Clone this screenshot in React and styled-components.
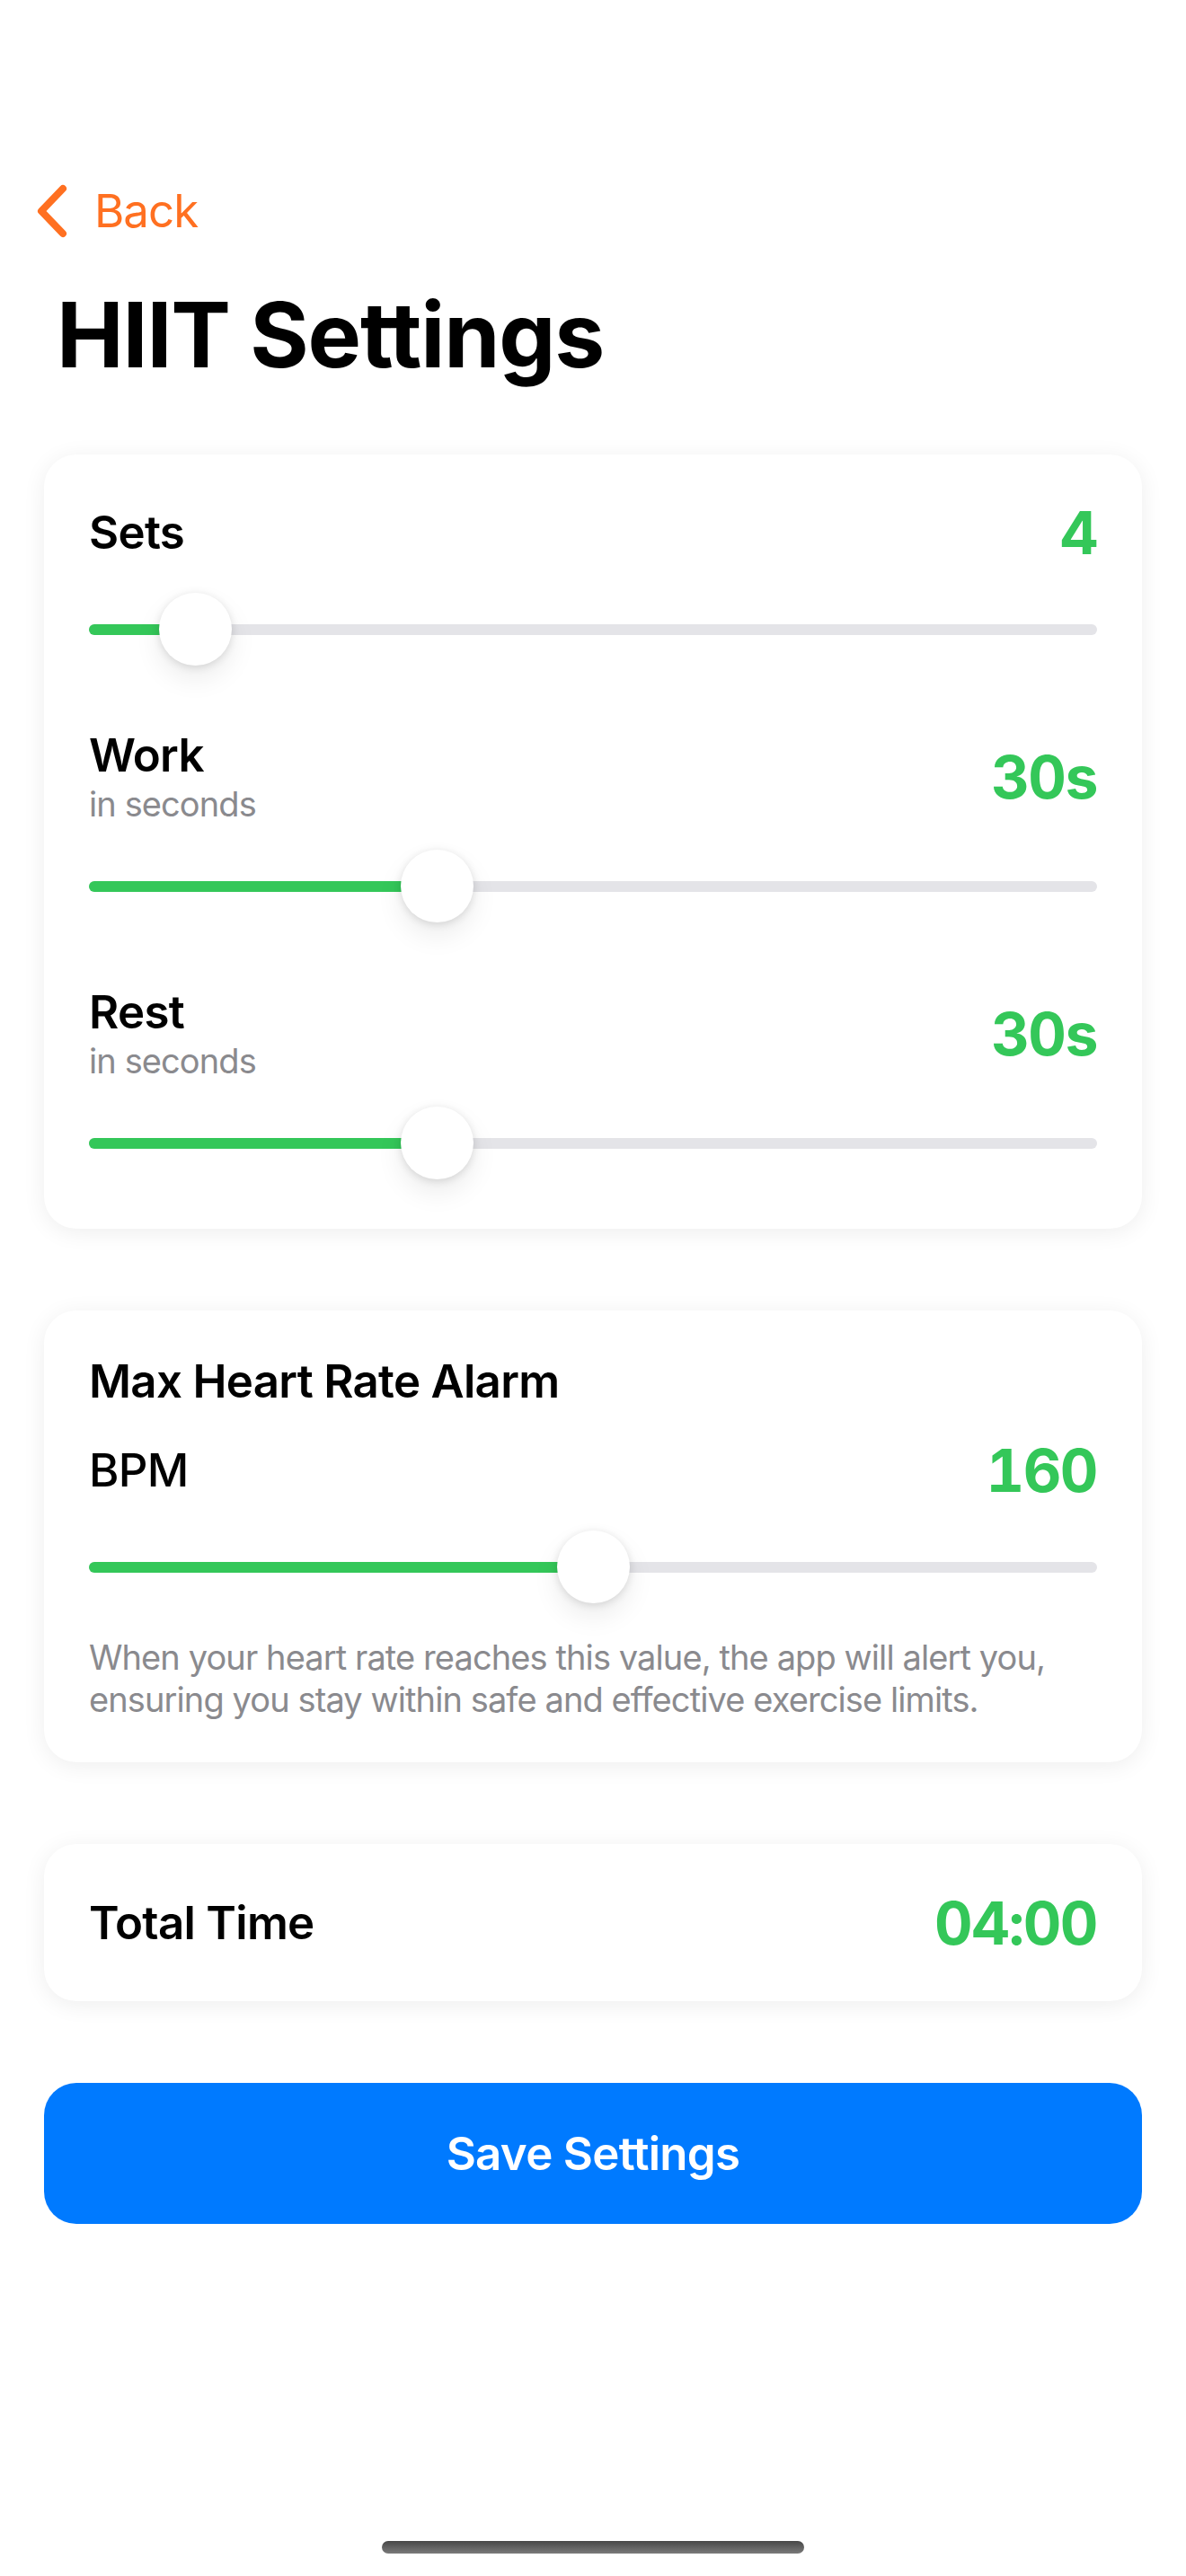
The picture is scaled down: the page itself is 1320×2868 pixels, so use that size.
import React from 'react';
import styled, { createGlobalStyle } from 'styled-components';

const green = '#34C759';
const orange = '#FF7021';
const gray = '#8A8A8E';

const GlobalStyle = createGlobalStyle`
  html, body {
    margin: 0;
    padding: 0;
    background: #ffffff;
  }
  body {
    font-family: Inter, "Noto Sans", "Liberation Sans", sans-serif;
    color: #000;
    -webkit-font-smoothing: antialiased;
  }
  * {
    box-sizing: border-box;
  }
`;

const Screen = styled.div`
  width: 1320px;
  min-height: 2868px;
  display: flex;
  flex-direction: column;
  background: #ffffff;
`;

const NavBar = styled.div`
  display: flex;
  align-items: center;
  gap: 29px;
  height: 62px;
  margin-top: 204px;
  padding-left: 40px;
`;

const BackLabel = styled.span`
  font-size: 51px;
  line-height: 62px;
  font-weight: 400;
  color: ${orange};
  letter-spacing: -1px;
`;

const Title = styled.h1`
  margin: 47px 0 0;
  padding-left: 63px;
  font-size: 100px;
  line-height: 120px;
  font-weight: 700;
  letter-spacing: -1.2px;
`;

const Content = styled.div`
  display: flex;
  flex-direction: column;
  gap: 91px;
  padding: 0 49px;
  margin-top: 73px;
`;

const Card = styled.section`
  background: #ffffff;
  border-radius: 36px;
  box-shadow: 0 4px 26px rgba(0, 0, 0, 0.07);
  padding: ${(p) => p.$pad || '48px 50px'};
  display: flex;
  flex-direction: column;
  gap: ${(p) => p.$gap || 0}px;
`;

const Section = styled.div`
  display: flex;
  flex-direction: column;
  gap: 27px;
`;

const Row = styled.div`
  display: flex;
  align-items: center;
  justify-content: space-between;
  margin-top: ${(p) => p.$top || 0}px;
`;

const LabelBlock = styled.div`
  display: flex;
  flex-direction: column;
`;

const Label = styled.div`
  font-size: 51px;
  line-height: 62px;
  font-weight: ${(p) => p.$weight || 600};
  letter-spacing: -0.7px;
`;

const SubLabel = styled.div`
  font-size: 38px;
  line-height: 47px;
  font-weight: 400;
  color: ${gray};
  letter-spacing: -0.9px;
`;

const Value = styled.div`
  font-size: 66px;
  line-height: 80px;
  font-weight: 700;
  color: ${green};
  letter-spacing: -1.5px;
  font-variant-numeric: tabular-nums;
`;

const Description = styled.p`
  margin: 37px 0 0;
  font-size: 38px;
  line-height: 47px;
  color: ${gray};
  letter-spacing: -0.9px;
  white-space: nowrap;
`;

const SliderWrap = styled.div`
  position: relative;
  height: 81px;
  display: flex;
  align-items: center;
  margin-top: ${(p) => p.$top || 0}px;
`;

const Rail = styled.div`
  position: relative;
  flex: 1;
  height: 12px;
  border-radius: 6px;
  background: #E4E4E8;
`;

const Fill = styled.div`
  position: absolute;
  left: 0;
  top: 0;
  bottom: 0;
  border-radius: 6px;
  background: ${green};
`;

const Thumb = styled.div`
  position: absolute;
  top: 0;
  width: 81px;
  height: 81px;
  border-radius: 50%;
  background: #ffffff;
  box-shadow: 0 2px 10px rgba(0, 0, 0, 0.12), 0 14px 30px rgba(0, 0, 0, 0.08);
`;

const SaveButton = styled.button`
  height: 157px;
  border: none;
  border-radius: 36px;
  background: #007AFF;
  color: #ffffff;
  font-family: inherit;
  font-size: 51px;
  font-weight: 600;
  letter-spacing: -0.7px;
`;

const HomeIndicator = styled.div`
  align-self: center;
  width: 470px;
  height: 14px;
  border-radius: 7px;
  margin: auto 0 25px;
  background: linear-gradient(#474747, #7a7a7a);
`;

function Chevron() {
  return (
    <svg width="36" height="60" viewBox="0 0 36 60">
      <path
        d="M30 5 L6 30 L30 55"
        fill="none"
        stroke={orange}
        strokeWidth="8"
        strokeLinecap="round"
        strokeLinejoin="round"
      />
    </svg>
  );
}

function Slider({ value, min, max, top }) {
  const frac = (value - min) / (max - min);
  return (
    <SliderWrap $top={top}>
      <Rail>
        <Fill style={{ width: `calc(${frac} * (100% - 81px) + 40px)` }} />
      </Rail>
      <Thumb style={{ left: `calc(${frac} * (100% - 81px))` }} />
    </SliderWrap>
  );
}

function SettingRow({ label, sub, value }) {
  return (
    <Row>
      <LabelBlock>
        <Label>{label}</Label>
        {sub && <SubLabel>{sub}</SubLabel>}
      </LabelBlock>
      <Value>{value}</Value>
    </Row>
  );
}

export default function App() {
  return (
    <Screen>
      <GlobalStyle />
      <NavBar>
        <Chevron />
        <BackLabel>Back</BackLabel>
      </NavBar>
      <Title>HIIT Settings</Title>

      <Content>
        <Card $pad="47px 50px 55px" $gap={69}>
          <Section>
            <SettingRow label="Sets" value="4" />
            <Slider value={4} min={1} max={41} />
          </Section>
          <Section>
            <SettingRow label="Work" sub="in seconds" value="30s" />
            <Slider value={30} min={10} max={70} />
          </Section>
          <Section>
            <SettingRow label="Rest" sub="in seconds" value="30s" />
            <Slider value={30} min={10} max={70} />
          </Section>
        </Card>

        <Card $pad="48px 50px 46px">
          <Label>Max Heart Rate Alarm</Label>
          <Row $top={28}>
            <Label $weight={500}>BPM</Label>
            <Value>160</Value>
          </Row>
          <Slider value={160} min={100} max={220} top={27} />
          <Description>
            When your heart rate reaches this value, the app will alert you,
            <br />
            ensuring you stay within safe and effective exercise limits.
          </Description>
        </Card>

        <Card $pad="48px 50px 47px">
          <SettingRow label="Total Time" value="04:00" />
        </Card>

        <SaveButton>Save Settings</SaveButton>
      </Content>

      <HomeIndicator />
    </Screen>
  );
}
